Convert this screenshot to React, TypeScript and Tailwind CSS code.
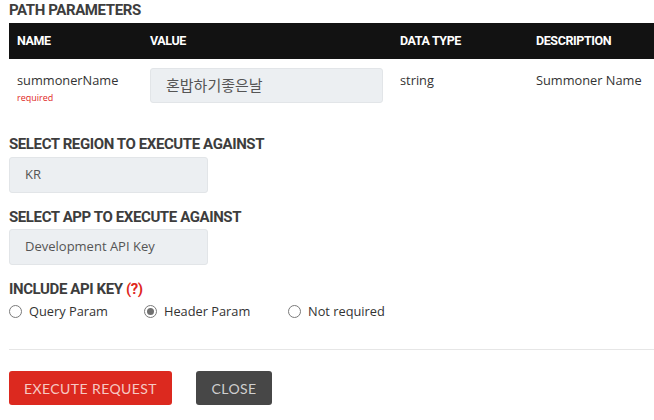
import React from "react";

const cond: React.CSSProperties = {
  fontFamily: 'Roboto, "Liberation Sans", sans-serif',
};

function Heading({ children, className = "" }: { children: React.ReactNode; className?: string }) {
  return (
    <div
      className={`text-[15px] leading-[20px] font-bold text-[#3d3d3d] tracking-[-0.4px] ${className}`}
      style={cond}
    >
      {children}
    </div>
  );
}

function Radio({ label, checked = false }: { label: string; checked?: boolean }) {
  return (
    <div className="flex items-center gap-[7px]">
      <span className="w-[13px] h-[13px] rounded-full border border-[#7a7a7a] bg-white flex items-center justify-center">
        {checked && <span className="w-[7px] h-[7px] rounded-full bg-[#707070]" />}
      </span>
      <span className="text-[12.8px] leading-[20px] text-[#333]">{label}</span>
    </div>
  );
}

export default function App() {
  return (
    <div
      className="w-[654px] h-[420px] bg-white pl-[9px] overflow-hidden flex flex-col"
      style={{ fontFamily: '"Open Sans", "Noto Sans", "Noto Sans CJK KR", sans-serif' }}
    >
      <Heading className="leading-[21px]">PATH PARAMETERS</Heading>
      <div className="mt-[2px]">
        <div
          className="grid grid-cols-[133px_250px_136px_1fr] h-[36px] items-center bg-[#121212] text-white text-[12.5px] font-bold tracking-[-0.4px]"
          style={cond}
        >
          <div className="pl-[8px]">NAME</div>
          <div className="pl-[8px]">VALUE</div>
          <div className="pl-[8px]">DATA TYPE</div>
          <div className="pl-[8px]">DESCRIPTION</div>
        </div>
        <div className="grid grid-cols-[133px_250px_136px_1fr]">
          <div className="pl-[8px] pt-[12px] flex flex-col">
            <span className="text-[12.8px] leading-[18px] text-[#333]">summonerName</span>
            <span className="text-[9px] leading-[12px] text-[#e0271c] mt-[3px]">required</span>
          </div>
          <div className="pl-[8px] pt-[9px]">
            <div
              className="w-[233px] h-[35px] rounded-[3px] bg-[#eceff2] border border-[#e2e5e8] flex items-center pl-[15px] text-[15px] text-[#555]"
              style={{ fontFamily: '"Noto Sans CJK KR", "Noto Sans", sans-serif' }}
            >
              혼밥하기좋은날
            </div>
          </div>
          <div className="pl-[8px] pt-[12px] text-[12.8px] leading-[18px] text-[#333]">string</div>
          <div className="pl-[8px] pt-[12px] text-[12.8px] leading-[18px] text-[#333]">Summoner Name</div>
        </div>
      </div>

      <Heading className="mt-[30px]">SELECT REGION TO EXECUTE AGAINST</Heading>
      <div className="mt-[3px] w-[199px] h-[36px] rounded-[3px] bg-[#eceff2] border border-[#e2e5e8] flex items-center pl-[15px] text-[13px] text-[#555]">
        KR
      </div>

      <Heading className="mt-[14px]">SELECT APP TO EXECUTE AGAINST</Heading>
      <div className="mt-[2px] w-[199px] h-[36px] rounded-[3px] bg-[#eceff2] border border-[#e2e5e8] flex items-center pl-[15px] text-[13px] text-[#555]">
        Development API Key
      </div>

      <Heading className="mt-[14px]">
        INCLUDE API KEY <span className="text-[#e0271c]">(?)</span>
      </Heading>
      <div className="mt-[2px] flex items-center h-[20px]">
        <div className="w-[135px]">
          <Radio label="Query Param" />
        </div>
        <div className="w-[144px]">
          <Radio label="Header Param" checked />
        </div>
        <Radio label="Not required" />
      </div>

      <div className="mt-[28px] h-px bg-[#e6e6e6]" />

      <div
        className="mt-[21px] flex gap-[24px]"
        style={{ fontFamily: 'Lato, "Open Sans", sans-serif' }}
      >
        <button className="w-[163px] h-[34px] rounded-[3px] bg-[#dc291f] text-[#f6c9c4] text-[14px] tracking-[0.03em] flex items-center justify-center">
          EXECUTE REQUEST
        </button>
        <button className="w-[76px] h-[34px] rounded-[3px] bg-[#474747] text-[#cfcfcf] text-[14px] tracking-[0.03em] flex items-center justify-center">
          CLOSE
        </button>
      </div>
    </div>
  );
}
